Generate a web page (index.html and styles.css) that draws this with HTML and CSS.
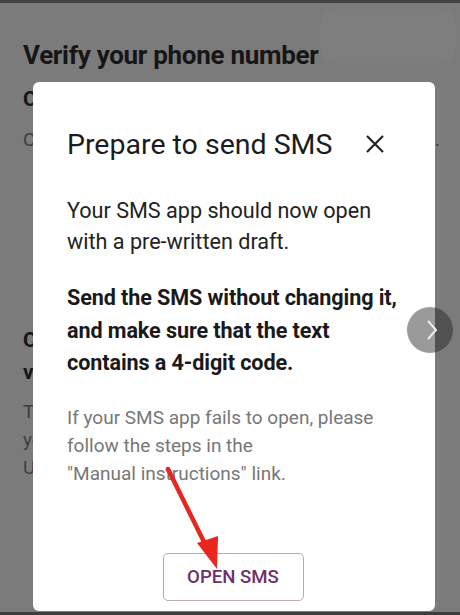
FILE: index.html
```html
<!DOCTYPE html>
<html>
<head>
<meta charset="utf-8">
<link rel="stylesheet" href="styles.css">
</head>
<body>
<div class="screen">
  <div class="topbar"></div>
  <div class="page">
    <div class="card-hint"></div>
    <h1 class="page-title">Verify your phone number</h1>
    <h2 class="page-sub">Choose a verification method</h2>
    <p class="page-text">Choose one of the methods below to verify yours.</p>
    <h2 class="page-sub second">Confirm your number<br>via SMS</h2>
    <p class="page-text multi">Tap the button to send an SMS from<br>your phone to our service number.<br>Use your default messaging app.</p>
  </div>
  <div class="dialog">
    <div class="dialog-head">
      <h3 class="dialog-title">Prepare to send SMS</h3>
      <svg class="close" width="20" height="20" viewBox="0 0 20 20"><path d="M2 2 L18 18 M18 2 L2 18" stroke="#222" stroke-width="2.2" fill="none"/></svg>
    </div>
    <p class="d-text">Your SMS app should now open<br>with a pre-written draft.</p>
    <p class="d-bold">Send the SMS without changing it,<br>and make sure that the text<br>contains a 4-digit code.</p>
    <p class="d-muted">If your SMS app fails to open, please<br>follow the steps in the<br>"Manual instructions" link.</p>
    <div class="actions">
      <button class="open-btn">OPEN SMS</button>
    </div>
  </div>
  <div class="next-btn">
    <svg width="14" height="22" viewBox="0 0 14 22"><path d="M3 2 L11 11 L3 20" fill="none" stroke="#ececec" stroke-width="2"/></svg>
  </div>
  <svg class="arrow" width="460" height="615" viewBox="0 0 460 615">
    <path d="M168 469 L206 546" stroke="#e8261f" stroke-width="4.5" stroke-linecap="round"/>
    <polygon points="197,543 217,569 218,536" fill="#e8261f"/>
  </svg>
  <div class="bottombar"></div>
</div>
</body>
</html>
```
FILE: styles.css
```css
* { box-sizing: border-box; }
html, body { margin: 0; padding: 0; }
body {
  width: 460px;
  height: 615px;
  overflow: hidden;
  background: #7b7b7c;
  font-family: Roboto, "Noto Sans", sans-serif;
}
.screen {
  position: relative;
  width: 460px;
  height: 615px;
  display: flex;
  flex-direction: column;
}
.topbar { height: 3px; background: #434343; flex: none; }
.bottombar {
  position: absolute;
  left: 0; right: 0; bottom: 0;
  height: 3px;
  background: #3c3c3c;
}
.page {
  position: relative;
  padding: 36px 0 0 23px;
  color: #161616;
}
.card-hint {
  position: absolute;
  right: 4px;
  top: 6px;
  width: 136px;
  height: 54px;
  border-radius: 16px;
  background: #7e7e7f;
}
.page-title {
  position: relative;
  margin: 0;
  font-size: 26px;
  font-weight: 700;
  line-height: 32px;
  letter-spacing: -0.3px;
}
.page-sub {
  margin: 12px 0 0;
  font-size: 21px;
  font-weight: 700;
  line-height: 32px;
}
.page-sub.second { margin-top: 170px; }
.page-text {
  margin: 11px 0 0;
  font-size: 19px;
  line-height: 28px;
  color: #3e3e3e;
  white-space: nowrap;
}
.page-text.multi { margin-top: 10px; }
.next-btn {
  position: absolute;
  left: 407px;
  top: 307px;
  width: 46px;
  height: 46px;
  border-radius: 50%;
  background: rgba(30, 30, 30, 0.45);
  display: flex;
  align-items: center;
  justify-content: center;
  padding-left: 3px;
}
.dialog {
  position: absolute;
  left: 33px;
  top: 82px;
  width: 402px;
  height: 529px;
  background: #fff;
  border-radius: 6px;
  padding: 44px 14px 0 34px;
  display: flex;
  flex-direction: column;
  color: #1b1b1b;
}
.dialog-head {
  display: flex;
  align-items: center;
  justify-content: space-between;
  padding-right: 36px;
}
.dialog-title {
  margin: 0;
  font-size: 28.5px;
  font-weight: 400;
  line-height: 38px;
  color: #1c1c1c;
}
.close { margin-top: -2px; }
.d-text {
  margin: 31px 0 0;
  font-size: 21.6px;
  line-height: 31px;
  color: #222;
}
.d-bold {
  margin: 25px 0 0;
  font-size: 21.6px;
  font-weight: 700;
  line-height: 32.5px;
  color: #1a1a1a;
  letter-spacing: -0.1px;
}
.d-muted {
  margin: 24px 0 0;
  font-size: 19px;
  line-height: 28px;
  color: #777;
}
.actions {
  margin-top: auto;
  margin-bottom: 10px;
  display: flex;
  justify-content: center;
  padding-right: 22px;
}
.open-btn {
  width: 141px;
  height: 48px;
  border: 1px solid #b9a9b8;
  border-radius: 5px;
  background: #fff;
  color: #6e2f6c;
  font-family: Roboto, sans-serif;
  font-size: 18.6px;
  font-weight: 500;
  letter-spacing: 0;
}
.arrow {
  position: absolute;
  left: 0;
  top: 0;
  pointer-events: none;
}
```
